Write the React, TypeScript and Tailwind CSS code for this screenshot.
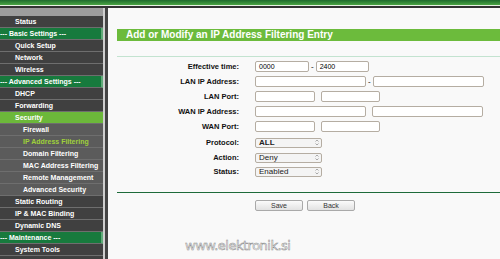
import React from "react";

type Item = { label: string; kind: "dark" | "head" | "active" | "sub" | "subActive" };

const items: Item[] = [
  { label: "Status", kind: "dark" },
  { label: "--- Basic Settings ---", kind: "head" },
  { label: "Quick Setup", kind: "dark" },
  { label: "Network", kind: "dark" },
  { label: "Wireless", kind: "dark" },
  { label: "--- Advanced Settings ---", kind: "head" },
  { label: "DHCP", kind: "dark" },
  { label: "Forwarding", kind: "dark" },
  { label: "Security", kind: "active" },
  { label: "Firewall", kind: "sub" },
  { label: "IP Address Filtering", kind: "subActive" },
  { label: "Domain Filtering", kind: "sub" },
  { label: "MAC Address Filtering", kind: "sub" },
  { label: "Remote Management", kind: "sub" },
  { label: "Advanced Security", kind: "sub" },
  { label: "Static Routing", kind: "dark" },
  { label: "IP & MAC Binding", kind: "dark" },
  { label: "Dynamic DNS", kind: "dark" },
  { label: "--- Maintenance ---", kind: "head" },
  { label: "System Tools", kind: "dark" },
  { label: "", kind: "dark" },
];

function NavRow({ item }: { item: Item }) {
  const base =
    "h-[12px] shrink-0 flex items-center border-b border-[#6e6e6e] text-[7px] font-bold leading-none whitespace-nowrap";
  if (item.kind === "head")
    return <div className={`${base} bg-[#177a3d] border-r-2 border-r-[#5fa978] text-white pl-0`}>{item.label}</div>;
  if (item.kind === "active")
    return <div className={`${base} bg-[#6cb83a] text-white pl-[15px]`}>{item.label}</div>;
  if (item.kind === "sub")
    return <div className={`${base} bg-[#5b5b5b] text-white pl-[23px]`}>{item.label}</div>;
  if (item.kind === "subActive")
    return <div className={`${base} bg-[#5b5b5b] text-[#9fd03a] pl-[23px]`}>{item.label}</div>;
  return <div className={`${base} bg-[#404040] text-white pl-[15px]`}>{item.label}</div>;
}

function Input({ w, v }: { w: string; v?: string }) {
  return (
    <div className={`${w} h-[11px] bg-white border border-[#b5ada2] rounded-[2px] text-[7px] leading-[9px] pl-[3px] text-black`}>
      {v}
    </div>
  );
}

function Select({ v, bold }: { v: string; bold?: boolean }) {
  return (
    <div className="w-[67px] h-[10px] bg-[#f4f4f4] border border-[#b5ada2] rounded-[2px] flex items-center justify-between pl-[3px] pr-[2px]">
      <span className={`text-[8px] leading-none text-[#222] ${bold ? "font-bold" : ""}`}>{v}</span>
      <svg width="4" height="7" viewBox="0 0 4 7">
        <path d="M0.5 2.5 L2 1 L3.5 2.5" stroke="#888" strokeWidth="0.7" fill="none" />
        <path d="M0.5 4.5 L2 6 L3.5 4.5" stroke="#888" strokeWidth="0.7" fill="none" />
      </svg>
    </div>
  );
}

function Row({ label, children, mt }: { label: string; children: React.ReactNode; mt?: string }) {
  return (
    <div className={`flex items-center h-[11px] ${mt ?? "mt-[4px]"}`}>
      <div className="w-[122px] text-right text-[7.5px] font-bold text-[#111] leading-none whitespace-nowrap">{label}</div>
      <div className="ml-[16px] flex items-center">{children}</div>
    </div>
  );
}

export default function App() {
  return (
    <div
      className="relative w-[500px] h-[259px] overflow-hidden bg-[#f9f9f9] flex flex-col"
      style={{ fontFamily: '"Liberation Sans", Arial, sans-serif' }}
    >
      {/* top header band */}
      <div className="h-[5px] bg-gradient-to-b from-[#1f6b2e] to-[#4aa543] shrink-0" />
      <div className="h-[1px] bg-[#e8f2e4] shrink-0" />
      <div className="h-[2px] bg-[#333] shrink-0" />
      <div className="flex flex-1 min-h-0">
        {/* sidebar */}
        <div className="w-[103px] shrink-0 flex flex-col bg-[#404040] overflow-hidden">
          <div className="h-[8px] bg-[#9d9d9d] shrink-0" />
          {items.map((it, i) => (
            <NavRow key={i} item={it} />
          ))}
        </div>
        <div className="w-[2px] bg-[#cfcfcf] shrink-0" />
        <div className="w-[3px] bg-[#444] shrink-0" />
        {/* content */}
        <div className="flex-1 pl-[9px] flex flex-col">
          <div className="mt-[21px] h-[12px] bg-[#6cbb3c] flex items-center pl-[9px]">
            <span className="text-white font-bold text-[10px] leading-none whitespace-nowrap">
              Add or Modify an IP Address Filtering Entry
            </span>
          </div>
          <div className="mt-[15px] h-[1px] bg-[#c3e3d0]" />
          <div className="mt-[4px] flex flex-col">
            <Row label="Effective time:" mt="mt-0">
              <Input w="w-[54px]" v="0000" />
              <span className="mx-[2px] text-[8px] leading-none text-black">-</span>
              <Input w="w-[53px]" v="2400" />
            </Row>
            <Row label="LAN IP Address:">
              <Input w="w-[111px]" />
              <span className="mx-[2px] text-[8px] leading-none text-black">-</span>
              <Input w="w-[111px]" />
            </Row>
            <Row label="LAN Port:">
              <Input w="w-[60px]" />
              <div className="w-[6px]" />
              <Input w="w-[59px]" />
            </Row>
            <Row label="WAN IP Address:">
              <Input w="w-[111px]" />
              <div className="w-[6px]" />
              <Input w="w-[111px]" />
            </Row>
            <Row label="WAN Port:">
              <Input w="w-[60px]" />
              <div className="w-[6px]" />
              <Input w="w-[59px]" />
            </Row>
            <Row label="Protocol:" mt="mt-[5px]">
              <Select v="ALL" bold />
            </Row>
            <Row label="Action:">
              <Select v="Deny" />
            </Row>
            <Row label="Status:" mt="mt-[3px]">
              <Select v="Enabled" />
            </Row>
          </div>
          <div className="mt-[15px] h-[1px] bg-[#1e6b3a]" />
          <div className="mt-[7px] flex pl-[138px] gap-[4px]">
            <button className="w-[48px] h-[11px] border border-[#a9a9a9] rounded-[2px] bg-gradient-to-b from-[#fbfbfb] to-[#e2e2e2] text-[7px] leading-none text-[#333]">
              Save
            </button>
            <button className="w-[48px] h-[11px] border border-[#a9a9a9] rounded-[2px] bg-gradient-to-b from-[#fbfbfb] to-[#e2e2e2] text-[7px] leading-none text-[#333]">
              Back
            </button>
          </div>
        </div>
      </div>
      {/* watermark overlay */}
      <div
        className="absolute left-[185px] top-[239px] text-[13px] leading-none text-white tracking-[-0.5px] [-webkit-text-stroke:0.5px_#8a8a8a]"
        style={{ fontFamily: '"DejaVu Sans", Verdana, sans-serif' }}
      >
        www.elektronik.si
      </div>
    </div>
  );
}
